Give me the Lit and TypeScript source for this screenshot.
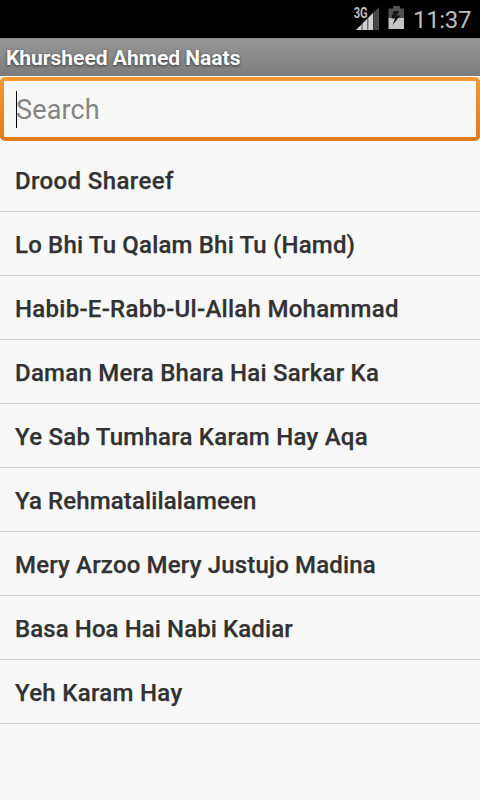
import { LitElement, html, css } from "lit";
import { customElement } from "lit/decorators.js";

// title and letter spacing
const TRACKS: [string, number][] = [
  ["Drood Shareef", 0.38],
  ["Lo Bhi Tu Qalam Bhi Tu (Hamd)", 0.18],
  ["Habib-E-Rabb-Ul-Allah Mohammad", 0.27],
  ["Daman Mera Bhara Hai Sarkar Ka", 0.24],
  ["Ye Sab Tumhara Karam Hay Aqa", 0.24],
  ["Ya Rehmatalilalameen", 0.12],
  ["Mery Arzoo Mery Justujo Madina", 0.17],
  ["Basa Hoa Hai Nabi Kadiar", 0.09],
  ["Yeh Karam Hay", 0.3],
];

@customElement("app-root")
export class AppRoot extends LitElement {
  static styles = css`
    :host { display: flex; flex-direction: column; width: 480px; height: 800px; overflow: hidden;
      background: #f8f8f8; font-family: Roboto, "Liberation Sans", sans-serif; }
    .status { height: 38px; flex: none; background: #000; display: flex; justify-content: flex-end; align-items: center;
      box-sizing: border-box; color: #bebebe; }
    .icons { display: block; width: 58px; height: 38px; flex: none; }
    .net { font: 700 14px Roboto, sans-serif; fill: #bebebe; }
    .clock { width: 67px; flex: none; font-size: 24px; line-height: 38px; margin-left: 5px; padding-top: 2px;
      font-weight: 400; letter-spacing: -0.35px; }
    .title { height: 38px; flex: none; box-sizing: border-box; padding-left: 6px; border-top: 1px solid #8c8c8c;
      background: linear-gradient(#969696, #7c7c7c); color: #fff; font-weight: 700; font-size: 21px; line-height: 38px;
      text-shadow: 0 1px 3px #333; white-space: nowrap; }
    .field { height: 64px; margin-top: 1px; flex: none; box-sizing: border-box; border-radius: 5px; padding: 4px;
      background: linear-gradient(#f39a34, #e07a1c); }
    .inner { height: 56px; display: flex; align-items: center; border-radius: 1px; background: #f8f8f8;
      padding-left: 12px; color: #858585; font-size: 27px; box-sizing: border-box; }
    .caret { width: 1px; height: 37px; background: #000; margin-right: -1px; }
    .hint { font-weight: 400; letter-spacing: 0.15px; padding-top: 2px; }
    .list { margin-top: 7px; }
    .row { height: 64px; box-sizing: border-box; border-bottom: 1px solid #d2d2d2; padding-left: 15px; line-height: 67px;
      font-size: 24px; font-weight: 500; -webkit-text-stroke: 0.25px #323232; color: #323232; white-space: nowrap; }
  `;

  render() {
    return html`
      <div class="status">
        <svg class="icons" viewBox="350 0 58 38">
          <path d="M379 7V30H356Z" fill="#484848" />
          <path d="M373.500 12.500V30H356Z" fill="#d0d0d0" />
          <path d="M362 20V31M367.8 16V31M373.5 10V31" stroke="#222" stroke-width="0.8" />
          <path d="M352 6H368.500V14L365 18.500H352Z" fill="#000" />
          <text class="net" x="353.700" y="17.500" textLength="14" lengthAdjust="spacingAndGlyphs">3G</text>
          <path d="M393 6H400V8.500H404V18H388.500V8.500H393Z" fill="#505050" />
          <path d="M388.500 18H404V29H388.500Z" fill="#c4c4c4" />
          <path d="M393.500 11H399L397 15.500H400.500L392.500 25L395 18.500H391.500Z" fill="#141414" />
        </svg>
        <span class="clock">11:37</span>
      </div>
      <div class="title">Khursheed Ahmed Naats</div>
      <div class="field"><div class="inner"><span class="caret"></span><span class="hint">Search</span></div></div>
      <div class="list">
        ${TRACKS.map(([name, gap]) => html`<div class="row" style="letter-spacing:${gap}px">${name}</div>`)}
      </div>
    `;
  }
}
